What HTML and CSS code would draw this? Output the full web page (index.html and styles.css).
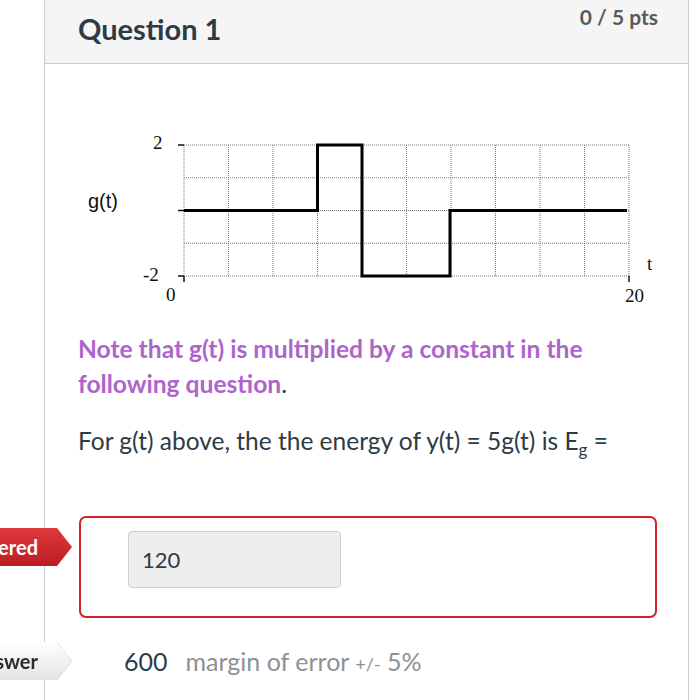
FILE: index.html
```html
<!DOCTYPE html>
<html>
<head>
<meta charset="utf-8">
<link rel="stylesheet" href="styles.css">
</head>
<body>
<div class="page">
  <div class="question">
    <div class="q-header">
      <h2 class="q-title">Question 1</h2>
      <div class="q-points">0 / 5 pts</div>
    </div>
    <div class="q-body">
      <svg class="graph" width="590" height="180" viewBox="0 0 590 180">
        <g class="grid">
          <line x1="106" y1="15" x2="106" y2="146"/>
          <line x1="150.5" y1="15" x2="150.5" y2="146"/>
          <line x1="195" y1="15" x2="195" y2="146"/>
          <line x1="239.5" y1="15" x2="239.5" y2="146"/>
          <line x1="284" y1="15" x2="284" y2="146"/>
          <line x1="328.5" y1="15" x2="328.5" y2="146"/>
          <line x1="373" y1="15" x2="373" y2="146"/>
          <line x1="417.5" y1="15" x2="417.5" y2="146"/>
          <line x1="462" y1="15" x2="462" y2="146"/>
          <line x1="506.5" y1="15" x2="506.5" y2="146"/>
          <line x1="551" y1="15" x2="551" y2="146"/>
          <line x1="106" y1="15" x2="551" y2="15"/>
          <line x1="106" y1="47.75" x2="551" y2="47.75"/>
          <line x1="106" y1="80.5" x2="551" y2="80.5"/>
          <line x1="106" y1="113.25" x2="551" y2="113.25"/>
          <line x1="106" y1="146" x2="551" y2="146"/>
        </g>
        <g class="ticks">
          <line x1="100" y1="15" x2="106" y2="15"/>
          <line x1="100" y1="80.5" x2="106" y2="80.5"/>
          <line x1="100" y1="146" x2="106" y2="146"/>
          <line x1="106" y1="146" x2="106" y2="152"/>
          <line x1="551" y1="146" x2="551" y2="152"/>
        </g>
        <path class="signal" d="M106 80.5 H239.5 V15 H284 V146 H372 V80.5 H549"/>
        <text class="axis" x="75" y="19">2</text>
        <text class="axis" x="65" y="151">-2</text>
        <text class="axis" x="88" y="171">0</text>
        <text class="axis" x="547" y="172">20</text>
        <text class="axis" x="569" y="140">t</text>
        <text class="ylabel" x="10" y="78">g(t)</text>
      </svg>
      <p class="note"><span class="note-hl">Note that g(t) is multiplied by a constant in the following question</span>.</p>
      <p class="prompt">For g(t) above, the the energy of y(t) = 5g(t) is E<sub>g</sub> =</p>

      <div class="answer-row">
        <div class="tag tag-wrong">You Answered</div>
        <div class="answer-box">
          <div class="answer-input">120</div>
        </div>
      </div>

      <div class="answer-row correct-row">
        <div class="tag-wrap"><div class="tag tag-correct">Correct Answer</div></div>
        <div class="correct-text"><span class="value">600</span><span class="margin">margin of error <span class="pm">+/-</span> 5%</span></div>
      </div>
    </div>
  </div>
</div>
</body>
</html>
```
FILE: styles.css
```css
html, body {
  margin: 0;
  padding: 0;
  background: #ffffff;
  overflow: hidden;
}
body {
  font-family: Lato, "Open Sans", sans-serif;
  color: #2d3b45;
}
.page {
  padding-left: 44px;
  height: 700px;
}
.question {
  width: 643px;
  height: 700px;
  border-left: 1px solid #c7cdd1;
  border-right: 1px solid #c7cdd1;
}
.q-header {
  height: 63px;
  background: #f5f5f5;
  border-bottom: 1px solid #c7cdd1;
  display: flex;
  justify-content: space-between;
  align-items: flex-start;
  padding: 0 30px 0 33px;
}
.q-title {
  margin: 0;
  padding-top: 12px;
  font-size: 29px;
  line-height: 34px;
  font-weight: 700;
  color: #2d3b45;
}
.q-points {
  padding-top: 4px;
  font-size: 21px;
  line-height: 25px;
  font-weight: 700;
  color: #555a5e;
}
.q-body {
  padding: 66px 31px 0 33px;
}
.graph {
  display: block;
  margin-left: 0;
}
.grid line {
  stroke: #777;
  stroke-width: 1;
  stroke-dasharray: 1 1;
}
.ticks line {
  stroke: #111;
  stroke-width: 1.5;
}
.signal {
  fill: none;
  stroke: #000;
  stroke-width: 3;
}
.axis {
  font-family: "Liberation Serif", serif;
  font-size: 19px;
  fill: #111;
}
.ylabel {
  font-family: "Liberation Sans", Arial, sans-serif;
  font-size: 20px;
  fill: #111;
}
.note {
  margin: 21px 0 0 0;
  font-size: 24.6px;
  line-height: 35px;
  color: #2d3b45;
}
.note-hl {
  color: #ad65cc;
  font-weight: 700;
}
.prompt {
  margin: 22px 0 0 0;
  font-size: 24.5px;
  line-height: 35px;
}
.prompt sub {
  font-size: 17px;
  line-height: 0;
  vertical-align: -6px;
}
.answer-row {
  position: relative;
  margin-top: 58px;
  margin-left: 1px;
}
.answer-box {
  height: 85px;
  border: 2px solid #d02128;
  border-radius: 7px;
  padding: 13px 0 0 47px;
  box-sizing: content-box;
}
.answer-input {
  width: 198px;
  height: 55px;
  padding-left: 13px;
  background: #eeeeee;
  border: 1px solid #cfcfcf;
  border-radius: 4px;
  font-size: 22px;
  line-height: 55px;
  color: #2d3b45;
}
.tag {
  position: absolute;
  right: calc(100% + 7px);
  height: 38px;
  padding: 0 34px 0 20px;
  font-size: 20px;
  font-weight: 700;
  line-height: 38px;
  white-space: nowrap;
  clip-path: polygon(0 0, calc(100% - 15px) 0, 100% 50%, calc(100% - 15px) 100%, 0 100%);
}
.tag-wrong {
  top: 12px;
  color: #ffffff;
  background: linear-gradient(#e0393d, #b91d23);
}
.correct-row {
  margin-top: 23px;
  height: 40px;
  display: flex;
  align-items: center;
}
.tag-wrap {
  position: absolute;
  right: calc(100% + 7px);
  top: 1px;
  filter: drop-shadow(0 0 0.6px #9a9a9a);
}
.tag-correct {
  position: static;
  display: block;
  height: 38px;
  color: #2b2b2b;
  background: linear-gradient(#ffffff, #e4e4e4);
}
.correct-text {
  padding-left: 45px;
  font-size: 25px;
  line-height: 40px;
  padding-top: 3px;
}
.value {
  color: #2d3b45;
  margin-right: 18px;
}
.margin {
  color: #8b9196;
}
.pm {
  font-size: 18px;
}
```
